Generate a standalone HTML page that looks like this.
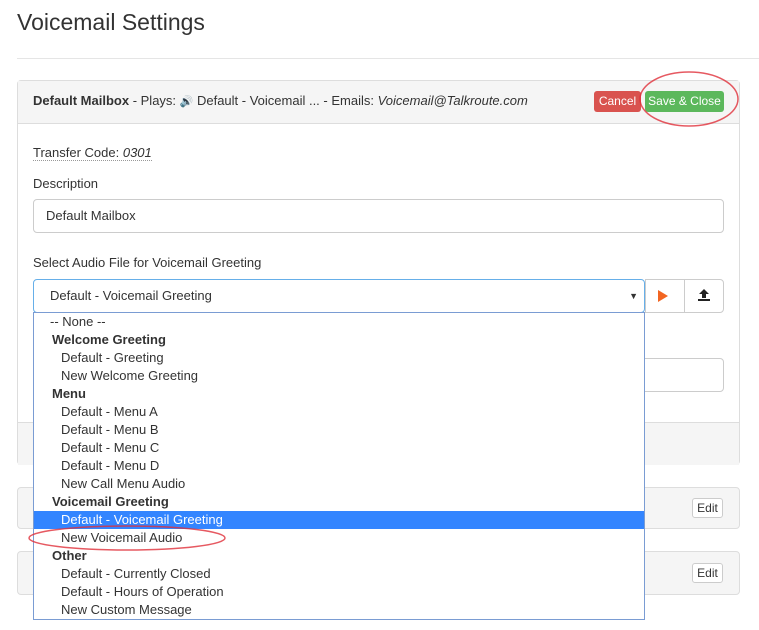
<!DOCTYPE html><html><head><style>
*{box-sizing:border-box}body{margin:0;width:759px;height:630px;overflow:hidden;background:#fff;font-family:"Liberation Sans",sans-serif;font-size:13px;color:#333;position:relative}
.a{position:absolute}
h1{position:absolute;left:17px;top:9px;margin:0;font-size:23px;font-weight:normal;color:#333}
.panel{position:absolute;left:17px;width:723px;border:1px solid #ddd;border-radius:4px;background:#fff}
.btn{position:absolute;border-radius:3px;font-size:12px;color:#fff;text-align:center;line-height:21px}
.inp{position:absolute;border:1px solid #ccc;border-radius:4px;background:#fff;padding-left:12px}
.dd{position:absolute;left:33px;top:312px;width:612px;height:308px;border:1px solid #7a9cd3;background:#fff;font-size:13px}
.dd div{height:18px;line-height:18px;padding-left:27px;white-space:nowrap}
.dd .g{font-weight:bold;padding-left:18px}
.dd .s{background:#3385ff;color:#fff}
.edit{position:absolute;left:692px;width:31px;height:20px;border:1px solid #ccc;border-radius:3px;font-size:12px;text-align:center;line-height:18px;background:#fff}
</style></head><body>
<h1>Voicemail Settings</h1>
<div class="a" style="left:17px;top:58px;width:742px;border-top:1px solid #e5e5e5"></div>
<div class="panel" style="top:80px;height:385px">
<div class="a" style="left:0;top:0;width:721px;height:43px;background:#f5f5f5;border-bottom:1px solid #ddd"></div>
<div class="a" style="left:0;top:341px;width:721px;height:43px;background:#f5f5f5;border-top:1px solid #ddd"></div>
</div>
<div class="a" style="left:33px;top:93px;font-size:13px"><b>Default Mailbox</b> - Plays: <span style="font-size:11px">🔊</span> Default - Voicemail ... - Emails: <i>Voicemail@Talkroute.com</i></div>
<div class="btn" style="left:594px;top:91px;width:47px;background:#d9534f">Cancel</div>
<div class="btn" style="left:645px;top:91px;width:79px;background:#5cb85c">Save &amp; Close</div>
<svg class="a" style="left:636px;top:68px" width="106" height="62"><ellipse cx="53" cy="31" rx="49" ry="27" fill="none" stroke="#e0303a" stroke-width="1.5" opacity=".8"/></svg>
<div class="a" style="left:33px;top:145px;border-bottom:1px dotted #999">Transfer Code: <i>0301</i></div>
<div class="a" style="left:33px;top:176px">Description</div>
<div class="inp" style="left:33px;top:199px;width:691px;height:34px;line-height:32px">Default Mailbox</div>
<div class="a" style="left:33px;top:255px">Select Audio File for Voicemail Greeting</div>
<div class="inp" style="left:33px;top:279px;width:612px;height:34px;line-height:32px;border-color:#66afe9;padding-left:16px">Default - Voicemail Greeting<span class="a" style="right:6px;top:0;font-size:9px">▼</span></div>
<div class="a" style="left:645px;top:279px;width:79px;height:34px;border:1px solid #ccc;border-radius:0 4px 4px 0"></div>
<div class="a" style="left:684px;top:279px;width:1px;height:34px;background:#ccc"></div>
<svg class="a" style="left:657px;top:289px" width="12" height="14"><path d="M1 1L11 7L1 13Z" fill="#f26522"/></svg>
<svg class="a" style="left:697px;top:288px" width="14" height="14"><path d="M7 1L2 6H5V10H9V6H12Z M1 11H13V13H1Z" fill="#222"/></svg>
<div class="inp" style="left:33px;top:358px;width:691px;height:34px"></div>
<div class="panel" style="top:487px;height:42px;background:#f5f5f5"></div>
<div class="edit" style="top:498px">Edit</div>
<div class="panel" style="top:551px;height:44px;background:#f5f5f5"></div>
<div class="edit" style="top:563px">Edit</div>
<div class="dd">
<div style="padding-left:16px">-- None --</div>
<div class="g">Welcome Greeting</div><div>Default - Greeting</div><div>New Welcome Greeting</div>
<div class="g">Menu</div><div>Default - Menu A</div><div>Default - Menu B</div><div>Default - Menu C</div><div>Default - Menu D</div><div>New Call Menu Audio</div>
<div class="g">Voicemail Greeting</div><div class="s">Default - Voicemail Greeting</div><div>New Voicemail Audio</div>
<div class="g">Other</div><div>Default - Currently Closed</div><div>Default - Hours of Operation</div><div>New Custom Message</div>
</div>
<svg class="a" style="left:26px;top:523px" width="204" height="30"><ellipse cx="101" cy="15" rx="98" ry="12" fill="none" stroke="#e0303a" stroke-width="1.5" opacity=".8"/></svg>
</body></html>
